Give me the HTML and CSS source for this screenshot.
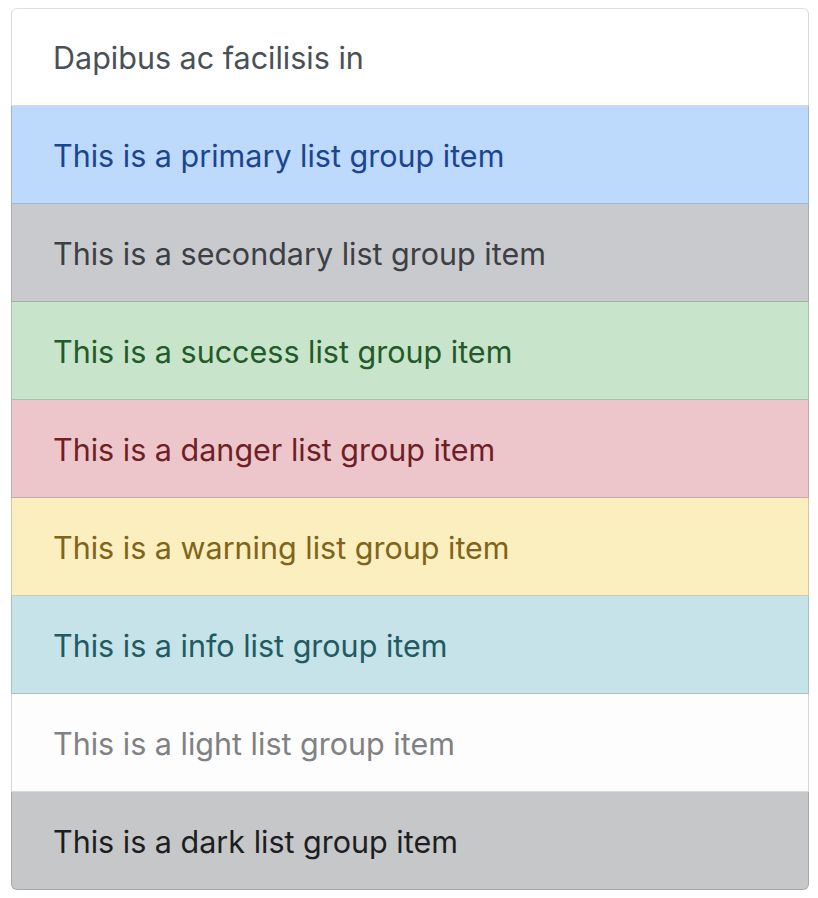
FILE: index.html
```html
<!DOCTYPE html>
<html>
<head>
<meta charset="utf-8">
<link rel="stylesheet" href="styles.css">
</head>
<body>
<ul class="list-group">
  <li class="item">Dapibus ac facilisis in</li>
  <li class="item primary">This is a primary list group item</li>
  <li class="item secondary">This is a secondary list group item</li>
  <li class="item success">This is a success list group item</li>
  <li class="item danger">This is a danger list group item</li>
  <li class="item warning">This is a warning list group item</li>
  <li class="item info">This is a info list group item</li>
  <li class="item light">This is a light list group item</li>
  <li class="item dark">This is a dark list group item</li>
</ul>
</body>
</html>
```

FILE: styles.css
```css
html, body {
  background: #fff;
}
body {
  margin: 8px 9px 8px 11px;
  font-family: Inter, "Liberation Sans", sans-serif;
  font-size: 30.5px;
}
.list-group {
  list-style: none;
  margin: 0;
  padding: 0;
  display: flex;
  flex-direction: column;
}
.item {
  padding: 25px 41px 23px;
  line-height: 49px;
  color: #495057;
  background: #fff;
  border: 1px solid rgba(0, 0, 0, 0.15);
  border-top-width: 0;
}
.item:first-child {
  border-top-width: 1px;
  border-top-color: rgba(0, 0, 0, 0.125);
  border-top-left-radius: 6px;
  border-top-right-radius: 6px;
  padding-top: 24px;
}
.item:last-child {
  border-bottom-left-radius: 6px;
  border-bottom-right-radius: 6px;
}
.primary { background: #bdd9fc; color: #1c4590; }
.secondary { background: #c9cacd; color: #3c4045; }
.success { background: #c8e4cb; color: #235a29; }
.danger { background: #edc6cb; color: #6e1f27; }
.warning { background: #fbefbf; color: #80641a; }
.info { background: #c5e3e8; color: #225a62; }
.light { background: #fdfdfd; color: #808182; }
.dark { background: #c6c7c9; color: #1c1e21; }
```
